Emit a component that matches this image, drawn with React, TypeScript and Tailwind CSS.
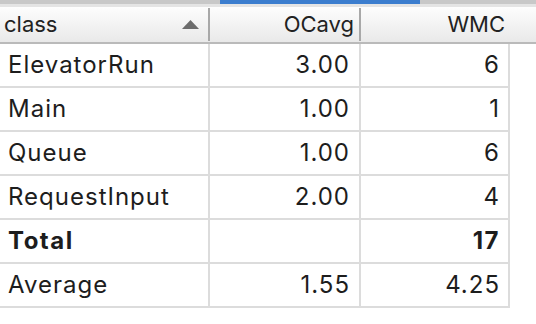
const rows = [
  { name: "ElevatorRun", ocavg: "3.00", wmc: "6" },
  { name: "Main", ocavg: "1.00", wmc: "1" },
  { name: "Queue", ocavg: "1.00", wmc: "6" },
  { name: "RequestInput", ocavg: "2.00", wmc: "4" },
  { name: "Total", ocavg: "", wmc: "17", bold: true },
  { name: "Average", ocavg: "1.55", wmc: "4.25" },
];

export default function App() {
  return (
    <div
      className="w-[536px] h-[324px] bg-white overflow-hidden text-[#1d1d1d]"
      style={{ fontFamily: "Inter, 'Liberation Sans', sans-serif" }}
    >
      {/* tab strip */}
      <div className="flex h-[4px] bg-[#c8c8c8]">
        <div className="ml-[220px] w-[200px] bg-[#3b7dce]" />
      </div>
      <div className="h-[3px] bg-[#e4e4e4]" />

      {/* header */}
      <div className="flex h-[37px] border-b-2 border-[#bababa] bg-gradient-to-b from-[#fdfdfd] to-[#e9e9e9] text-[22px] text-[#222]">
        <div className="flex w-[210px] items-center justify-between border-r-2 border-[#a8a8a8] pl-[4px] pr-[9px] my-[1px]">
          <span>class</span>
          <svg width="17" height="9" viewBox="0 0 17 9">
            <path d="M8.5 0 L17 9 L0 9 Z" fill="#6c6c6c" />
          </svg>
        </div>
        <div className="flex w-[151px] items-center justify-end border-r-2 border-[#a8a8a8] pr-[5px] my-[1px]">
          OCavg
        </div>
        <div className="flex w-[148px] items-center justify-end pr-[4px]">WMC</div>
        <div className="flex-1" />
      </div>

      {/* body */}
      <div className="w-[510px] text-[24px] tracking-[1px]">
        {rows.map((r) => (
          <div
            key={r.name}
            className={`flex h-[44px] border-b-2 border-[#dcdcdc] ${r.bold ? "font-bold tracking-[1.5px]" : ""}`}
          >
            <div className="flex w-[210px] items-center border-r-2 border-[#dcdcdc] pl-[8px]">
              {r.name}
            </div>
            <div className="flex w-[151px] items-center justify-end border-r-2 border-[#dcdcdc] pr-[9px]">
              {r.ocavg}
            </div>
            <div className="flex w-[149px] items-center justify-end border-r-2 border-[#dcdcdc] pr-[8px]">
              {r.wmc}
            </div>
          </div>
        ))}
      </div>
    </div>
  );
}
